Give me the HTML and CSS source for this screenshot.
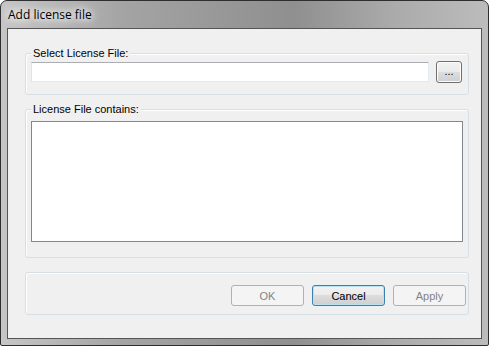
FILE: index.html
```html
<!DOCTYPE html>
<html>

<head>
    <meta charset="utf-8">
    <title>Add license file</title>
    <link rel="stylesheet" href="styles.css">
</head>

<body>
    <div class="dlg-window">
        <div class="dlg-title"><span>Add license file</span></div>
        <div class="dlg-client">
            <div class="dlg-group dlg-group-file">
                <span class="dlg-legend">Select License File:</span>
                <div class="dlg-row">
                    <input class="dlg-input" type="text">
                    <button class="dlg-btn dlg-browse">...</button>
                </div>
            </div>
            <div class="dlg-group dlg-group-content">
                <span class="dlg-legend">License File contains:</span>
                <textarea class="dlg-text"></textarea>
            </div>
            <div class="dlg-group dlg-group-actions">
                <button class="dlg-btn" disabled>OK</button>
                <button class="dlg-btn dlg-focus">Cancel</button>
                <button class="dlg-btn" disabled>Apply</button>
            </div>
        </div>
    </div>
</body>

</html>
```

FILE: styles.css
```css
html,
body {
    margin: 0;
    padding: 0;
    font-size: 11px;
    font-family: "Liberation Sans", Arial, sans-serif;
    background: #fff;
}

.dlg-window {
    width: 489px;
    height: 346px;
    box-sizing: border-box;
    border: 1px solid #2e2e2e;
    border-radius: 7px 7px 2px 2px;
    padding: 0 6px 6px 6px;
    display: flex;
    flex-direction: column;
    background: linear-gradient(to right, #c6c6c6 0%, #a4a4a4 25%, #8f8f8f 60%, #aaaaaa 80%, #bcbcbc 100%);
}

.dlg-title {
    height: 27px;
    line-height: 27px;
    padding-left: 1px;
    font-family: "Open Sans", "Noto Sans", sans-serif;
    font-size: 12px;
    color: #000;
}

.dlg-title span {
    text-shadow: 0 0 6px #fff, 0 0 10px #fff, 0 0 14px #eee;
}

.dlg-client {
    flex: auto;
    background: #f0f0f0;
    border: 1px solid #555;
    padding: 24px 12px 23px 17px;
    display: flex;
    flex-direction: column;
    gap: 14px;
}

.dlg-group {
    position: relative;
    border: 1px solid #d5dfe5;
    border-radius: 3px;
    box-shadow: inset 1px 1px 0 #fff;
}

.dlg-legend {
    position: absolute;
    left: 5px;
    top: -7px;
    padding: 0 2px 0 2px;
    line-height: 13px;
    background: #f0f0f0;
    color: #000;
}

.dlg-group-file {
    padding: 7px 6px 11px 5px;
}

.dlg-row {
    display: flex;
    align-items: center;
    height: 22px;
}

.dlg-input {
    flex: 1 1 0;
    min-width: 0;
    height: 20px;
    box-sizing: border-box;
    margin: 0;
    padding: 0 2px;
    border: 1px solid #e3e9ef;
    border-top-color: #abadb3;
    border-left-color: #e2e3ea;
    background: #fff;
}

.dlg-group-content {
    padding: 11px 5px 15px 5px;
}

.dlg-text {
    display: block;
    width: 432px;
    height: 121px;
    box-sizing: border-box;
    margin: 0;
    border: 1px solid #828790;
    background: #fff;
    resize: none;
}

.dlg-group-actions {
    height: 43px;
    box-sizing: border-box;
    padding: 12px 2px 8px 0;
    display: flex;
    justify-content: flex-end;
    gap: 8px;
}

.dlg-btn {
    flex: none;
    width: 73px;
    height: 21px;
    box-sizing: border-box;
    margin: 0;
    padding: 0;
    font-family: "Liberation Sans", Arial, sans-serif;
    font-size: 11px;
    color: #000;
    border: 1px solid #707070;
    border-radius: 3px;
    box-shadow: inset 0 0 0 1px #fcfcfc;
    background: linear-gradient(to bottom, #f2f2f2 0%, #ebebeb 50%, #dddddd 50%, #cfcfcf 100%);
}

.dlg-browse {
    width: 26px;
    height: 22px;
    margin-left: 7px;
    padding-bottom: 2px;
}

.dlg-btn:disabled {
    color: #838383;
    border-color: #adb2b5;
    box-shadow: none;
    background: #f4f4f4;
}

.dlg-focus {
    border-color: #3c7fb1;
    box-shadow: inset 0 0 0 1px #b8e3f7;
}
```
